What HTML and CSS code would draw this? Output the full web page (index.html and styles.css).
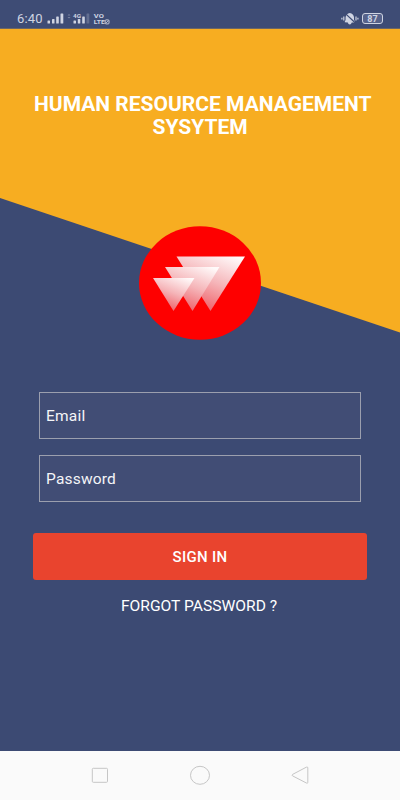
FILE: index.html
```
<!DOCTYPE html>
<html lang="en">
<head>
  <meta charset="UTF-8">
  <title>Human Resource Management</title>
  <link rel="stylesheet" href="styles.css">
</head>
<body>

  <div class="status-bar">
    <span class="time">6:40</span>
    <svg class="signal" width="64" height="14" viewBox="0 0 64 14" fill="#cfd4e2">
      <rect x="0.5" y="8.5" width="2.5" height="3" rx="0.6"/>
      <rect x="5" y="7" width="2.5" height="4.5" rx="0.6"/>
      <rect x="9.2" y="4.5" width="2.6" height="7" rx="0.6"/>
      <rect x="13.5" y="1.5" width="2.8" height="10" rx="0.6"/>
      <path d="M20.5 3.5l1.5-1.5 1.5 1.5zM20.5 5l1.5 1.5 1.5-1.5z" opacity="0.4"/>
      <text x="26" y="5.5" class="tiny" textLength="8" lengthAdjust="spacingAndGlyphs">4G</text>
      <rect x="26.5" y="8.5" width="2.5" height="3" rx="0.6"/>
      <rect x="30.8" y="7" width="2.5" height="4.5" rx="0.6"/>
      <rect x="35.2" y="4.5" width="2.6" height="7" rx="0.6"/>
      <rect x="39.5" y="1.5" width="2.8" height="10" rx="0.6" opacity="0.25"/>
      <text x="46.8" y="5.9" class="tiny" textLength="10" lengthAdjust="spacingAndGlyphs">VO</text>
      <text x="46.8" y="12.3" class="tiny" textLength="11" lengthAdjust="spacingAndGlyphs">LTE</text>
      <rect x="58.2" y="7.9" width="3.8" height="4" rx="0.8" fill="none" stroke="#cfd4e2" stroke-width="0.9"/>
      <path d="M58.9 11.2l2.4-2.6" stroke="#cfd4e2" stroke-width="0.8"/>
    </svg>
    <svg class="bell" width="18" height="14" viewBox="0 0 18 14">
      <path d="M3.8 10.2V9.4L4.6 8V5.2Q5 1.8 8.8 1Q12.6 1.8 13 5.2V8L14 9.4V10.4H10.8Q10.2 12.4 8.8 12.4Q7.2 12.4 6.8 10.4Z" fill="#cfd4e2"/>
      <path d="M2.8 4.6V8.4M0.9 5.8V7.4M15 4.6V8.4M16.9 5.8V7.4" stroke="#cfd4e2" stroke-width="1.2"/>
      <path d="M4.2 1.4L14.4 11" stroke="#3e4c75" stroke-width="1.2"/>
    </svg>
    <div class="battery">87</div>
  </div>

  <div class="login-page">
    <h1>HUMAN RESOURCE MANAGEMENT<br><span>SYSYTEM</span></h1>

    <svg class="logo" width="122" height="114" viewBox="0 0 122 114">
      <defs>
        <linearGradient id="fade" x1="0.85" y1="0" x2="0.35" y2="1">
          <stop offset="0" stop-color="#fffafa"/>
          <stop offset="0.5" stop-color="#f5b4b8"/>
          <stop offset="1" stop-color="#ee5a62"/>
        </linearGradient>
      </defs>
      <ellipse cx="61" cy="57" rx="61" ry="56.7" fill="#fe0000"/>
      <g fill="url(#fade)">
        <path d="M37.5 30.5H106L71.5 85Z"/>
        <path d="M26 41H80.5L53.5 85Z"/>
        <path d="M14 52H55.5L34.5 85Z"/>
      </g>
    </svg>

    <form id="loginForm">
      <input type="email" id="email" placeholder="Email">
      <input type="password" id="password" placeholder="Password">
      <button type="submit">SIGN IN</button>
    </form>
    <a class="forgot">FORGOT PASSWORD ?</a>
  </div>

  <div class="nav-bar">
    <svg width="22" height="20" viewBox="0 0 22 20"><rect x="3.3" y="3.3" width="15.2" height="14" rx="1"/></svg>
    <svg width="22" height="20" viewBox="0 0 22 20"><ellipse cx="11" cy="10.3" rx="9.5" ry="9"/></svg>
    <svg width="22" height="20" viewBox="0 0 22 20"><path d="M17.3 2.2Q18.8 1.5 18.8 2.8V17.4Q18.8 18.7 17.4 18L3.6 10.9Q2.4 10.1 3.6 9.4Z"/></svg>
  </div>

</body>
</html>
```

FILE: styles.css
```
* {
  box-sizing: border-box;
}

body {
  margin: 0;
  height: 800px;
  display: flex;
  flex-direction: column;
  font-family: Roboto, sans-serif;
  color: white;
  overflow: hidden;
}

.status-bar {
  height: 29px;
  background-color: #3e4c75;
  border-bottom: 1px solid #6b6666;
  display: flex;
  align-items: center;
  padding: 9px 17px 0 17px;
  color: #cfd4e2;
}

.time {
  width: 30px;
  font-size: 13px;
  letter-spacing: 0.2px;
  line-height: 19px;
}

.tiny {
  font-size: 6px;
  font-weight: bold;
}

.bell {
  margin-left: auto;
}

.battery {
  width: 21px;
  height: 11px;
  margin-left: 3px;
  border: 1px solid #cfd4e2;
  border-radius: 3px;
  background-color: #56628a;
  font-size: 9px;
  font-weight: bold;
  line-height: 10px;
  text-align: center;
}

.login-page {
  height: 722px;
  display: flex;
  flex-direction: column;
  align-items: center;
  background-color: #3c4a73;
  position: relative;
  z-index: 0;
}

.login-page::before {
  content: "";
  position: absolute;
  z-index: -1;
  top: 0;
  left: 0;
  width: 100%;
  height: 304px;
  background-color: #f7ad21;
  clip-path: polygon(0 0, 100% 0, 100% 303.5px, 0 169px);
}

h1 {
  margin: 64px 0 0 5px;
  height: 46px;
  font-size: 20px;
  line-height: 23px;
  font-weight: bold;
  text-align: center;
  white-space: nowrap;
  transform: scaleX(1.05);
}

h1 span {
  padding-right: 5px;
}

.logo {
  margin-top: 87px;
}

form {
  width: 334px;
  margin-top: 52px;
  display: flex;
  flex-direction: column;
}

input {
  height: 47px;
  margin: 0 6px 16px 6px;
  padding: 1px 6px 0;
  border: 1px solid #9b9fae;
  border-radius: 0;
  background-color: #414d75;
  color: white;
  font-family: inherit;
  font-size: 15.5px;
  letter-spacing: 0.2px;
}

input::placeholder {
  color: #f4f5f8;
}

button {
  height: 47px;
  margin-top: 15px;
  background-color: #e9442e;
  color: white;
  font-family: inherit;
  font-size: 15px;
  font-weight: 500;
  letter-spacing: 0.3px;
  border: none;
  border-radius: 3px;
}

.forgot {
  margin-top: 16px;
  font-size: 15px;
  line-height: 20px;
  transform: translateX(-1px) scaleX(1.04);
}

.nav-bar {
  flex: 1;
  background-color: #fafafa;
  display: flex;
  justify-content: center;
  gap: 78px;
  padding-top: 14px;
}

.nav-bar svg {
  fill: none;
  stroke: #c6c6c6;
  stroke-width: 1;
}
```
